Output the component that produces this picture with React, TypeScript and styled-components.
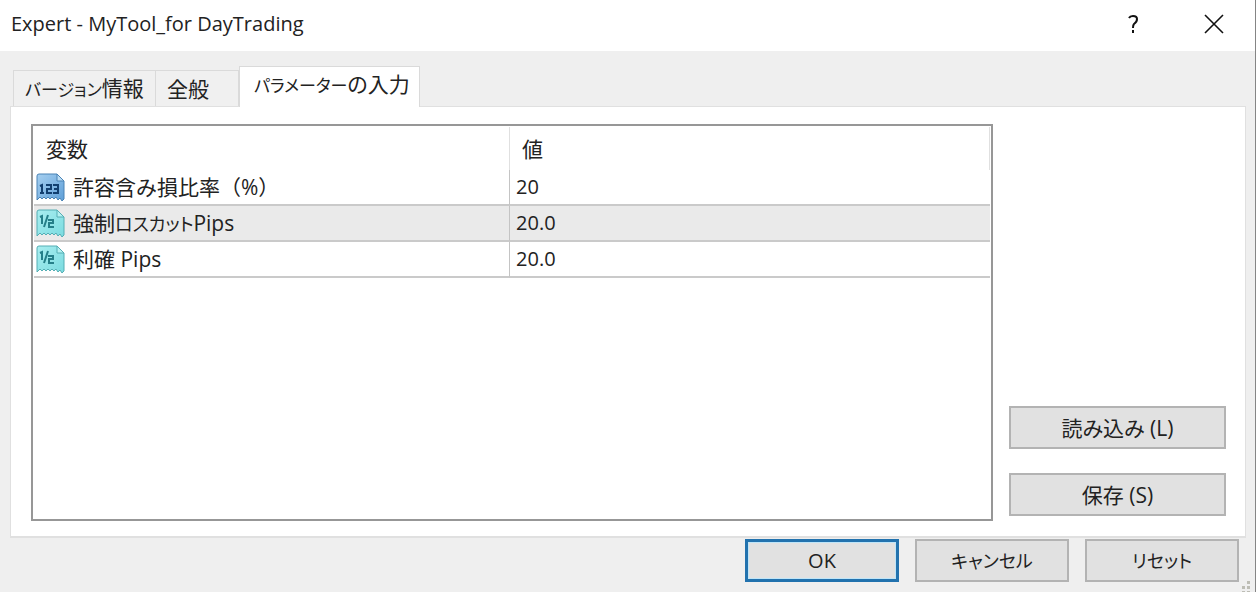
import React, { useState } from "react";
import styled, { createGlobalStyle, css } from "styled-components";

const GlobalStyle = createGlobalStyle`
  *, *::before, *::after { box-sizing: border-box; }
  body {
    margin: 0;
    background: #efefef;
    color: #222;
    font-family: "Open Sans", "Noto Sans CJK JP", sans-serif;
    font-size: 20px;
    line-height: 28px;
    font-feature-settings: "palt";
  }
  button { font: inherit; color: inherit; font-feature-settings: inherit; }
`;

const Dialog = styled.main`
  display: flex;
  flex-direction: column;
  min-height: 100vh;
  border-right: 1px solid #858585;
`;

const TitleBar = styled.header`
  display: flex;
  align-items: center;
  justify-content: space-between;
  height: 51px;
  padding: 0 20px 4px 11px;
  background: #fff;
`;

const Title = styled.h1`
  margin: 0;
  font-size: 20px;
  font-weight: 400;
`;

const TitleActions = styled.div`
  display: flex;
  gap: 38px;
`;

const TitleButton = styled.button`
  display: grid;
  place-items: center;
  width: 43px;
  height: 40px;
  padding: 0;
  border: 0;
  background: transparent;
  color: #111;
`;

const TabList = styled.div`
  display: flex;
  align-items: flex-end;
  height: 55px;
  padding-left: 13px;
`;

const Tab = styled.button<{ $active?: boolean; $width: number }>`
  width: ${(p) => p.$width}px;
  height: 36px;
  padding: 0 0 0 11px;
  border: 1px solid #dadada;
  border-bottom: 0;
  background: #f0f0f0;
  font-size: 21px;
  text-align: left;
  white-space: nowrap;
  & + & { border-left: 0; }
  ${(p) =>
    p.$active &&
    css`
      && {
        height: 41px;
        margin-bottom: -1px;
        padding: 0 0 4px 14px;
        border-left: 1px solid #dadada;
        background: #fff;
        z-index: 1;
      }
    `}
`;

const Kana = styled.span<{ $small?: boolean }>`
  font-size: ${(p) => (p.$small ? 17 : 18)}px;
`;

const Panel = styled.section`
  display: flex;
  flex: 1;
  gap: 16px;
  margin: 0 9px 0 10px;
  padding: 17px 19px 15px 20px;
  border: 2px solid #e0e0e0;
  border-width: 1px 1px 2px;
  background: #fff;
`;

const ListBox = styled.div`
  flex: 1;
  padding: 1px;
  border: 2px solid #979797;
`;

const Grid = styled.table`
  width: 100%;
  table-layout: fixed;
  border-collapse: separate;
  border-spacing: 0;
  col:first-child { width: 49.8%; }
`;

const HeadCell = styled.th`
  height: 43px;
  padding: 0 12px;
  border-right: 1px solid #e0e0e0;
  font-size: 21px;
  font-weight: 400;
  text-align: left;
`;

const Row = styled.tr<{ $shaded: boolean }>`
  background: ${(p) => (p.$shaded ? "#eaeaea" : "#fff")};
`;

const Cell = styled.td`
  height: 36px;
  padding: 0 6px;
  border-bottom: 2px solid #cacaca;
  &:first-child {
    padding: 0 2px;
    border-right: 1px solid #c4c4c4;
  }
`;

const Name = styled.div`
  display: flex;
  align-items: center;
  gap: 8px;
  font-size: 21px;
  font-feature-settings: normal;
  white-space: nowrap;
  ${Kana} { font-feature-settings: "palt"; }
`;

const SideActions = styled.div`
  display: flex;
  flex-direction: column;
  justify-content: flex-end;
  gap: 24px;
  width: 217px;
  padding-bottom: 5px;
`;

const PushButton = styled.button<{ $primary?: boolean }>`
  height: 43px;
  padding: 0 8px;
  border: 2px solid #b3b3b3;
  background: #e1e1e1;
  font-size: 21px;
  ${(p) =>
    p.$primary &&
    css`
      border: 3px solid #2272ae;
      box-shadow: inset 0 0 0 1px #bfe5f8;
      font-size: 20px;
    `}
`;

const Footer = styled.footer`
  position: relative;
  display: grid;
  grid-template-columns: repeat(3, 154px);
  justify-content: end;
  gap: 16px;
  padding: 1px 16px 10px;
`;

const Grip = styled.svg`
  position: absolute;
  right: 4px;
  bottom: 0;
`;

function TypeIcon({ kind }: { kind: "int" | "double" }) {
  const isInt = kind === "int";
  const edge = isInt ? "#4a83b5" : "#55aeb4";
  const ink = isInt ? "#123f70" : "#257f89";
  const id = `fill-${kind}`;
  return (
    <svg width="29" height="29" viewBox="0 0 29 29" fill="none" aria-hidden="true">
      <defs>
        <linearGradient id={id} x1="0" y1="0" x2="1" y2="1">
          <stop offset="0" stopColor={isInt ? "#a5cff0" : "#a9eef0"} />
          <stop offset="1" stopColor={isInt ? "#5f9fd8" : "#7adbe0"} />
        </linearGradient>
      </defs>
      <path
        d="M1 3Q1 1 3 1H21L28 8V26L26 28L24 25L22 27L20 24L18 26L16 24L14 26L12 24L10 26L8 24L6 26L4 24L1 27Z"
        fill={`url(#${id})`}
        stroke={edge}
      />
      <path d="M21 1V8H28Z" fill={isInt ? "#b9dcf5" : "#b5f1f2"} stroke={edge} />
      {isInt ? (
        <path
          d="M4 13L6 12V20M4 20H8M10 12H15V16H11V20H16M17 12H22V20H17M18 16H22"
          stroke={ink}
          strokeWidth="2"
        />
      ) : (
        <path d="M4 8L6 7V15M12 6L8 18M12 11H17V14H13V18H18" stroke={ink} strokeWidth="2" />
      )}
    </svg>
  );
}

const parameters = [
  { id: "loss", name: "許容含み損比率（%）", value: "20", kind: "int" },
  {
    id: "cut",
    name: (
      <>
        強制<Kana>ロスカット</Kana>Pips
      </>
    ),
    value: "20.0",
    kind: "double",
  },
  { id: "profit", name: "利確 Pips", value: "20.0", kind: "double" },
] as const;

const tabs = [
  { id: "about", kana: "バージョン", text: "情報", width: 143 },
  { id: "common", kana: "", text: "全般", width: 83 },
  { id: "inputs", kana: "パラメーター", text: "の入力", width: 181 },
];

export default function App() {
  const [active, setActive] = useState(2);
  return (
    <Dialog>
      <GlobalStyle />
      <TitleBar>
        <Title>Expert - MyTool_for DayTrading</Title>
        <TitleActions>
          <TitleButton aria-label="ヘルプ">
            <svg width="12" height="20" viewBox="0 0 12 20" fill="none" aria-hidden="true">
              <path d="M2 4Q3 2 6 2Q10 2 10 5Q10 8 7 10Q6 11 6 14" stroke="currentColor" strokeWidth="2" />
              <path d="M5 16H7V19H5Z" fill="currentColor" />
            </svg>
          </TitleButton>
          <TitleButton aria-label="閉じる">
            <svg width="20" height="20" viewBox="0 0 20 20" aria-hidden="true">
              <path d="M1 1L19 19M19 1L1 19" stroke="currentColor" strokeWidth="1.6" />
            </svg>
          </TitleButton>
        </TitleActions>
      </TitleBar>
      <TabList role="tablist">
        {tabs.map((tab, i) => (
          <Tab
            key={tab.id}
            role="tab"
            aria-selected={i === active}
            $active={i === active}
            $width={tab.width}
            onClick={() => setActive(i)}
          >
            {tab.kana && <Kana $small>{tab.kana}</Kana>}
            {tab.text}
          </Tab>
        ))}
      </TabList>
      <Panel role="tabpanel">
        <ListBox>
          <Grid>
            <colgroup>
              <col />
              <col />
            </colgroup>
            <thead>
              <tr>
                <HeadCell scope="col">変数</HeadCell>
                <HeadCell scope="col">値</HeadCell>
              </tr>
            </thead>
            <tbody>
              {parameters.map((p, i) => (
                <Row key={p.id} $shaded={i % 2 === 1}>
                  <Cell>
                    <Name>
                      <TypeIcon kind={p.kind} />
                      <span>{p.name}</span>
                    </Name>
                  </Cell>
                  <Cell>{p.value}</Cell>
                </Row>
              ))}
            </tbody>
          </Grid>
        </ListBox>
        <SideActions>
          <PushButton>読み込み (L)</PushButton>
          <PushButton>保存 (S)</PushButton>
        </SideActions>
      </Panel>
      <Footer>
        <PushButton $primary>OK</PushButton>
        <PushButton>
          <Kana>キャンセル</Kana>
        </PushButton>
        <PushButton>
          <Kana>リセット</Kana>
        </PushButton>
        <Grip width="12" height="12" viewBox="0 0 12 12" fill="#bdbdb5" aria-hidden="true">
          <path d="M8 1h3v3h-3zM8 6h3v3h-3zM3 6h3v3h-3zM8 11h3v1h-3zM3 11h3v1h-3z" />
        </Grip>
      </Footer>
    </Dialog>
  );
}
